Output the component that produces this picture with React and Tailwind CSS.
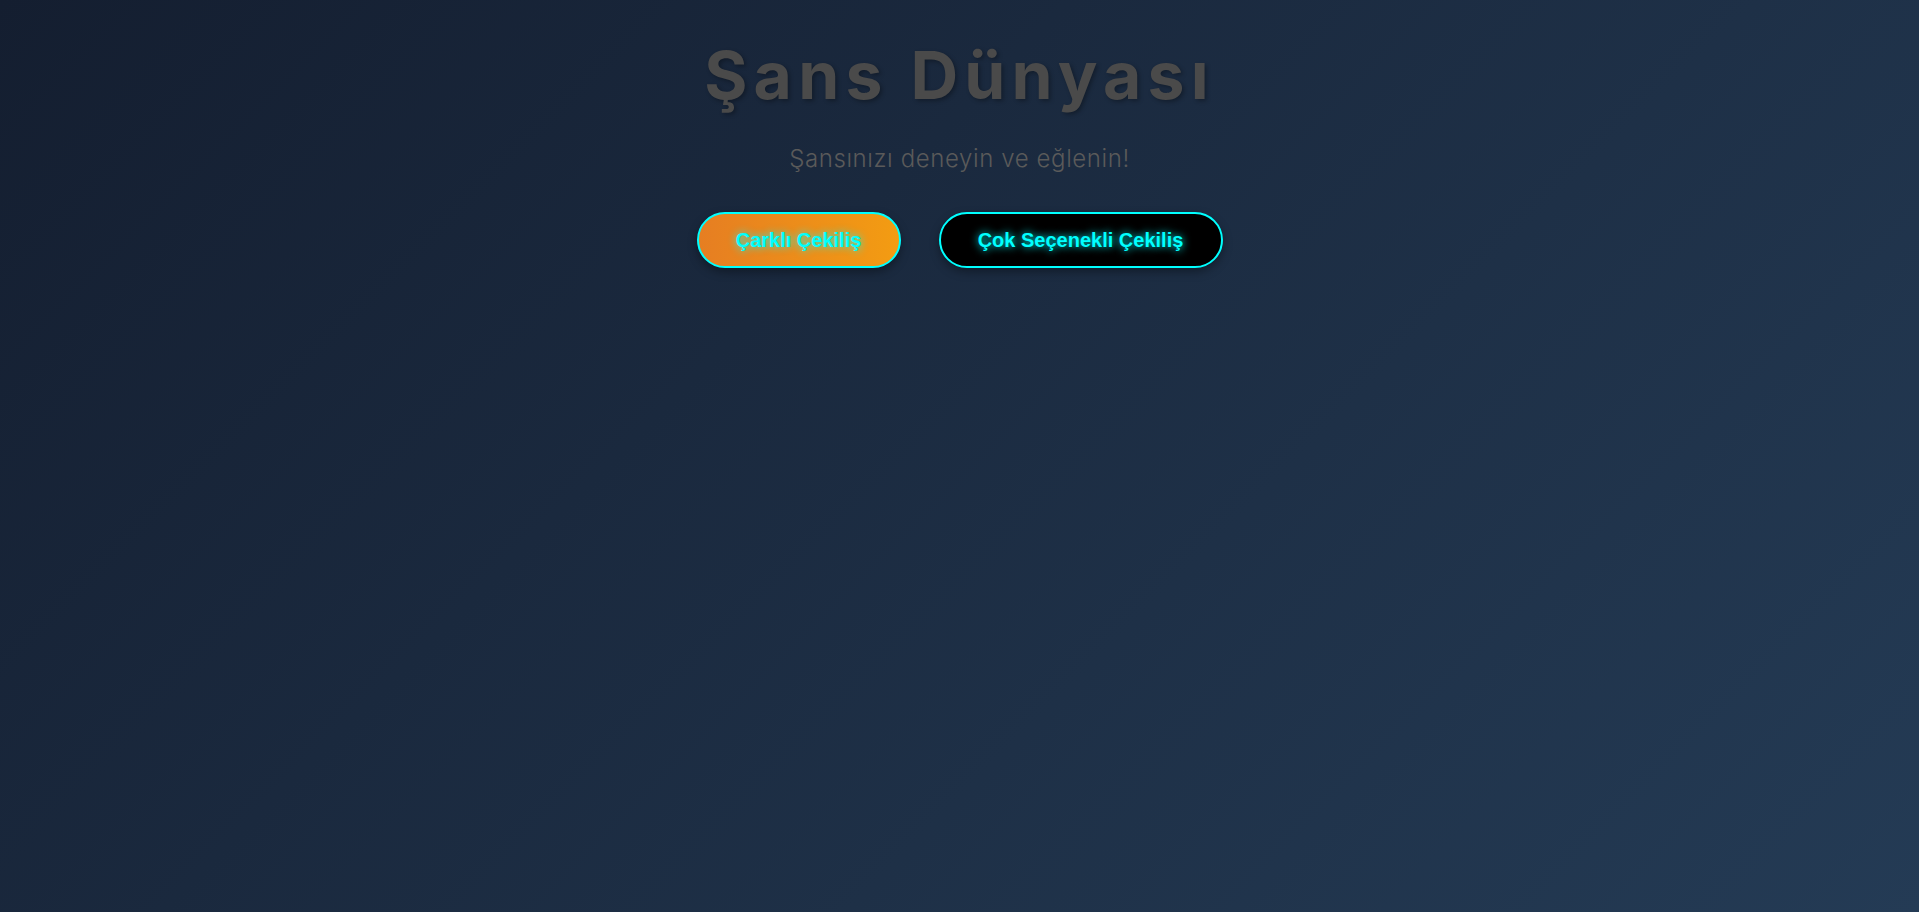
export default function App() {
  return (
    <div className="min-h-[912px] w-full bg-[linear-gradient(135deg,#141e30,#243b55)] flex flex-col items-center" style={{ fontFamily: "Inter, 'Noto Sans', sans-serif" }}>
      <h1 className="mt-[42px] text-[66px] leading-[1] font-bold tracking-[6.2px] text-[#4a4a4a] [text-shadow:2px_2px_4px_rgba(0,0,0,0.3)]">
        Şans Dünyası
      </h1>
      <p className="mt-[37px] text-[24px] leading-[1.2] font-light tracking-[0.6px] text-[#5a5a5a]">
        Şansınızı deneyin ve eğlenin!
      </p>
      <div className="mt-[38px] flex gap-[38px]" style={{ fontFamily: "'Liberation Sans', Arial, sans-serif" }}>
        <button className="h-[56px] w-[204px] rounded-full border-2 border-[#00ffff] bg-[linear-gradient(90deg,#e67e22,#f39c12)] text-[20px] font-bold text-[#00ffff] [text-shadow:0_0_8px_#00ffff] shadow-[0_4px_10px_rgba(0,0,0,0.35)]">
          Çarklı Çekiliş
        </button>
        <button className="h-[56px] w-[284px] rounded-full border-2 border-[#00ffff] bg-black text-[20px] font-bold text-[#00ffff] [text-shadow:0_0_8px_#00ffff] shadow-[0_4px_10px_rgba(0,0,0,0.35)]">
          Çok Seçenekli Çekiliş
        </button>
      </div>
    </div>
  );
}
